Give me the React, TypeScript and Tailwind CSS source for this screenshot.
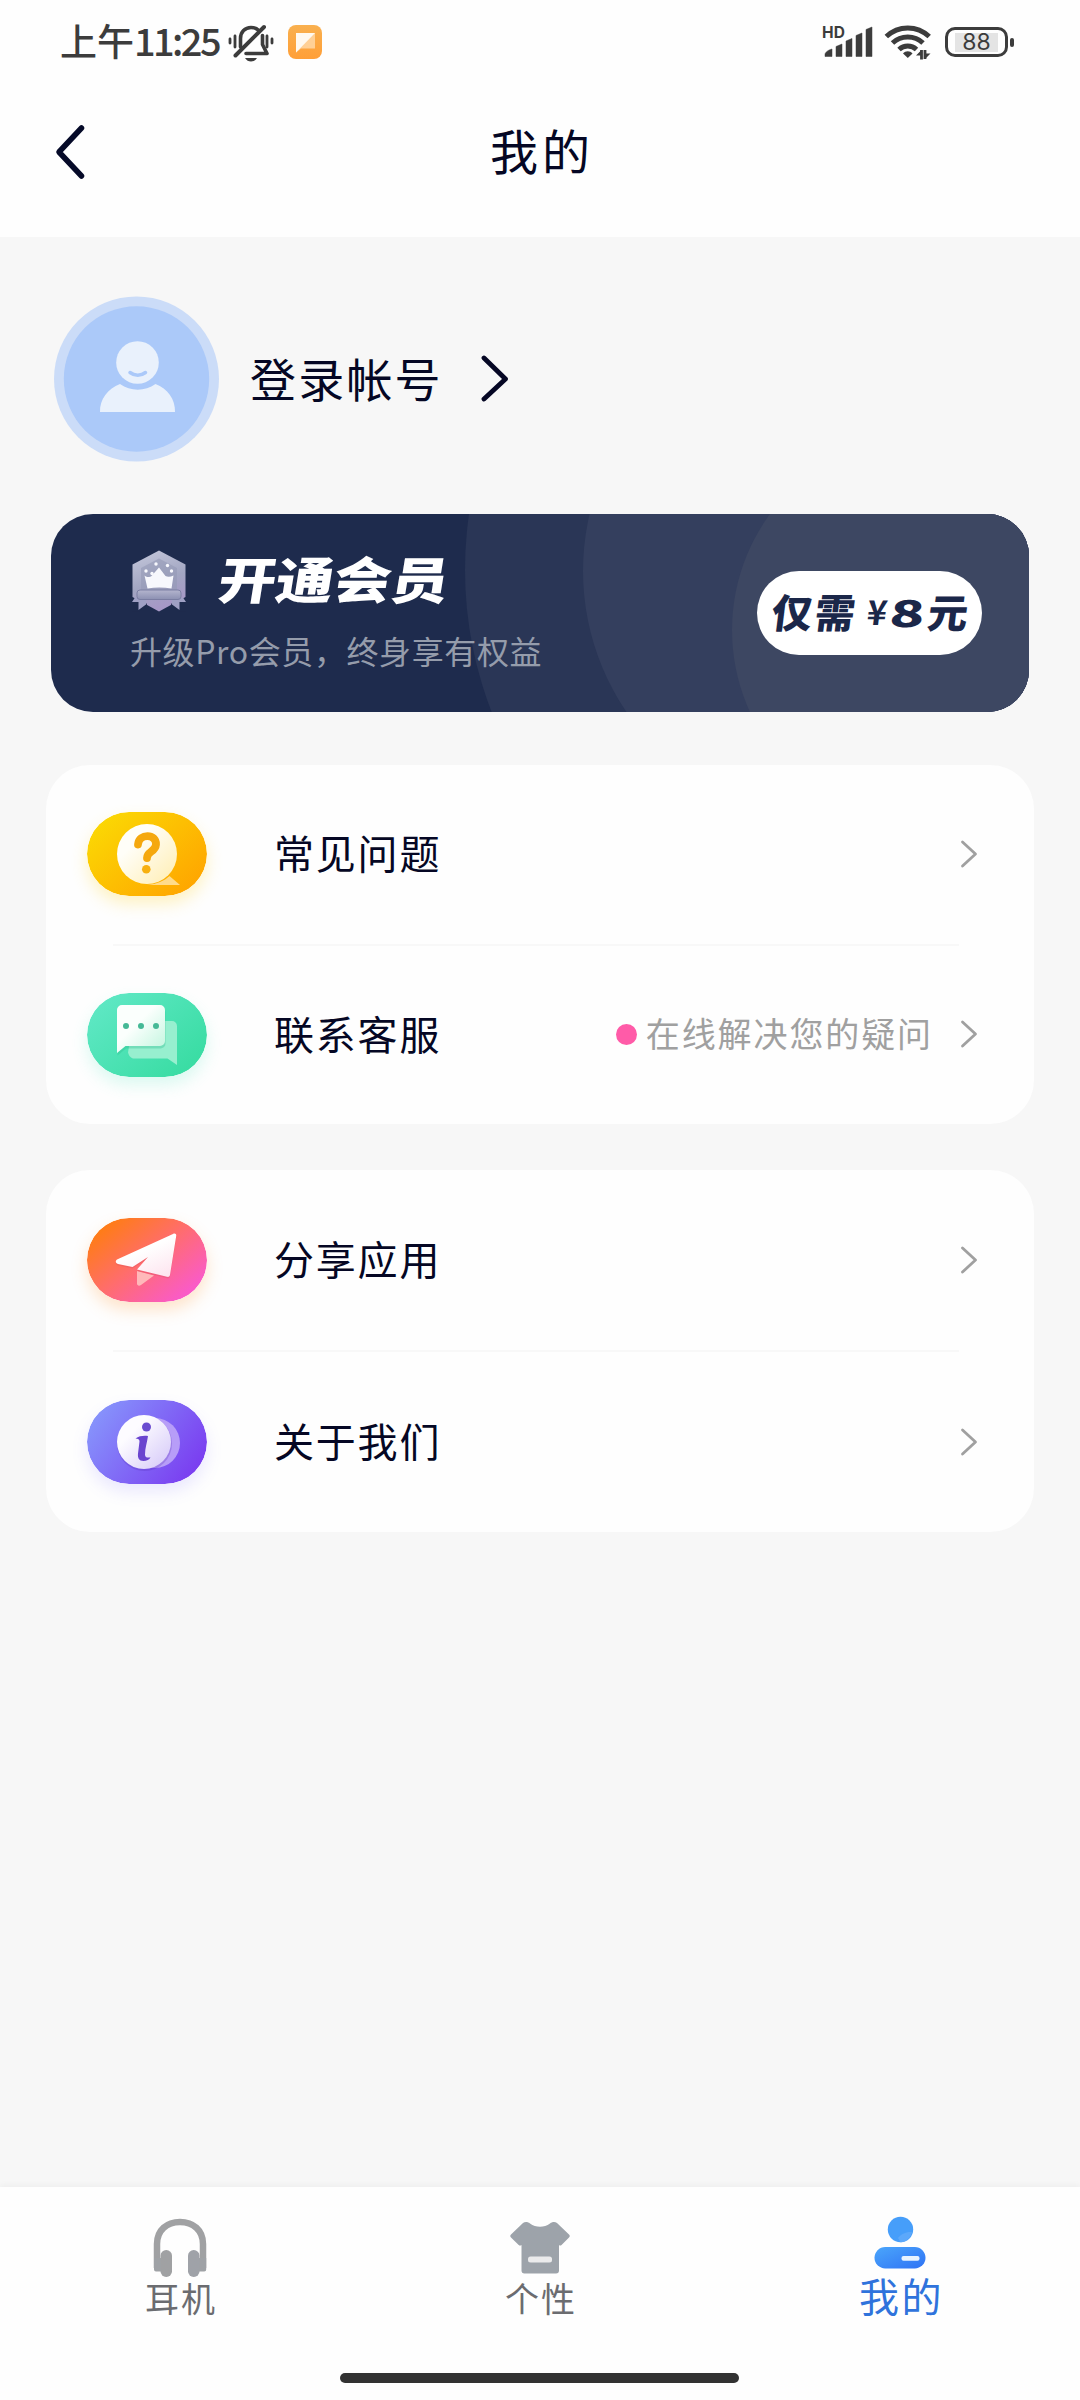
import { ReactNode } from "react";

interface rowProps {
    icon: ReactNode
    label: string
    note?: string
}

function BellOffIcon() {
    return (
        <svg className="ml-[8px] shrink-0" width="46" height="40" viewBox="0 0 46 40" fill="none" stroke="#3c3c3c" strokeLinecap="round">
            <path d="M2 17v4M7 14v11M39 14v11M44 17v4" strokeWidth="2.8" />
            <path d="M12.500 25V16.500C12.500 10 17 5.500 23 5.500c3 0 5.500.8 7.500 2.700M34.500 13.500v9l4.500 9H18" strokeWidth="3.600" strokeLinejoin="round" />
            <path d="M7.500 33.500 36 5" strokeWidth="4" />
            <path d="M17 36h12c-1.500 2.500-3.500 3.500-6 3.500s-4.500-1-6-3.500z" fill="#3c3c3c" stroke="none" />
        </svg>
    )
}

function NoteAppIcon() {
    return (
        <svg className="ml-[14px] shrink-0" width="34" height="34" viewBox="0 0 34 34">
            <defs>
                <linearGradient id="noteBg" x1="0" y1="0" x2="0" y2="1">
                    <stop offset="0" stopColor="#f9b04f" />
                    <stop offset="1" stopColor="#ff9f38" />
                </linearGradient>
            </defs>
            <rect width="34" height="34" rx="8" fill="url(#noteBg)" />
            <path d="M8 8h19v15.500H13L8 27.500z" fill="#ffd096" />
            <path d="M8 8h19L8 27.500z" fill="#fff9f0" />
        </svg>
    )
}

function SignalIcon() {
    return (
        <svg className="shrink-0" width="52" height="48" viewBox="0 -6 52 48">
            <text x="0" y="13.500" fontSize="15.500" fontWeight="700" fill="#3c3c3c" textLength="23" fontFamily="Inter, sans-serif">HD</text>
            <path d="M3 32.500v-2c0-2 3-4.500 7-5.500v7.500zM14 22.500l6-2.500v12.500h-6zM24 17l6-2.500v18h-6zM34 11.500l6-2.500v23.500h-6zM44 5.500l6-2.500v29.500h-6z" fill="#3c3c3c" stroke="#3c3c3c" strokeWidth="0.500" strokeLinejoin="round" />
        </svg>
    )
}

function WifiIcon() {
    return (
        <svg className="ml-[10px] shrink-0" width="48" height="36" viewBox="0 0 48 36" fill="none" stroke="#3c3c3c">
            <path d="M2.300 12.500C14.500 1 33 1 45.200 12.500" strokeWidth="5" />
            <path d="M8.500 19c8.500-8 22-8 30.500 0" strokeWidth="5" />
            <path d="M15 25.500c5-4.600 12.500-4.600 17.500 0" strokeWidth="5" />
            <path d="M19 29.500c2.500-3 7-3 9.500 0l-4.700 4.500z" fill="#3c3c3c" stroke="none" />
            <path d="M37.500 26v9.500M41 35v-9" strokeWidth="2.800" />
            <path d="M32 31.500l5-5v5zM46.500 29.500l-5 5v-5z" fill="#3c3c3c" stroke="none" />
        </svg>
    )
}

function StatusBar() {
    return (
        <div className="flex h-[84px] items-center pl-[60px] pr-[66px] text-[#3c3c3c]">
            <div className="flex h-10 w-[160px] items-center whitespace-nowrap pb-1 font-medium leading-none">
                <span className="text-[37px]">上午</span>
                <span className="text-[38px] tracking-[-2.6px]">11:25</span>
            </div>
            <BellOffIcon />
            <NoteAppIcon />
            <div className="ml-auto flex items-center">
                <SignalIcon />
                <WifiIcon />
                <div className="ml-[13px] flex h-[30px] w-[63px] items-center justify-center rounded-[10px] border-[3px] border-[#3c3c3c]">
                    <div className="flex h-[19px] w-[43px] items-center justify-center bg-[#e4e4e4] font-[Inter] text-[23px] leading-none">88</div>
                </div>
                <div className="ml-0.5 h-[9px] w-1 rounded-sm bg-[#3c3c3c]"></div>
            </div>
        </div>
    )
}

function Avatar() {
    return (
        <svg className="shrink-0" width="166" height="166" viewBox="0 0 166 166">
            <circle cx="82.500" cy="83" r="82.500" fill="#cbdcf8" />
            <circle cx="82.500" cy="83" r="72.700" fill="#abc9f9" />
            <circle cx="83.500" cy="66.500" r="21.300" fill="#e9f1fc" />
            <path d="M76 76.500c4.500 3.500 11 3.500 15.500 0" fill="none" stroke="#abc9f9" strokeWidth="3.500" strokeLinecap="round" />
            <path d="M46 116c-.5-12.500 8-23.500 20-28 10.500 7.500 25 7.500 35.500 0 12 4.500 20 15.500 19.500 28z" fill="#e9f1fc" />
        </svg>
    )
}

function MedalIcon() {
    return (
        <svg className="shrink-0" width="54" height="62" viewBox="0 0 54 62">
            <defs>
                <linearGradient id="medal" x1="0" y1="0" x2="0.300" y2="1">
                    <stop offset="0" stopColor="#c6c9dc" />
                    <stop offset="0.600" stopColor="#a2a6c2" />
                    <stop offset="1" stopColor="#a698c6" />
                </linearGradient>
                <linearGradient id="ribbon" x1="0" y1="0" x2="0" y2="1">
                    <stop offset="0" stopColor="#b4b5ce" />
                    <stop offset="1" stopColor="#8c90b2" />
                </linearGradient>
            </defs>
            <path d="M27 0.500 53.500 14.500V47L27 61.500 0.500 47V14.500z" fill="url(#medal)" />
            <path d="M0 49.500h12l3 5-7.500 7H0zM54 49.500H42l-3 5 7.500 7H54z" fill="#1e2b4d" />
            <path d="M0 52 3 47.500h11v7L6.500 60v-8zM54 52l-3-4.500H40v7l7.500 5.500v-8z" fill="#9fa0c4" />
            <path d="M27 8.500 45 18v22H9V18z" fill="#9599b6" opacity="0.600" />
            <path d="M12.500 25.500c3 2.500 5.500 1.500 7 .500L27 17.500l6.500 8.500c2 1 5 1 8-.500L39.500 38.500c-8-1.500-16.500-1.500-24 0z" fill="#f7f8fd" />
            <circle cx="24" cy="14" r="1.700" fill="#f7f8fd" />
            <circle cx="35.500" cy="15.500" r="1.700" fill="#f7f8fd" />
            <circle cx="14" cy="21" r="1.700" fill="#f7f8fd" />
            <circle cx="39.500" cy="21" r="1.700" fill="#f7f8fd" />
            <circle cx="20" cy="23.500" r="1.700" fill="#f7f8fd" />
            <rect x="5" y="40" width="44" height="9.500" rx="3" fill="url(#ribbon)" stroke="#777b9f" strokeWidth="0.900" />
        </svg>
    )
}

function MemberBanner() {
    return (
        <div className="relative mx-[51px] flex h-[198px] items-center overflow-hidden rounded-[42px] bg-[#1e2b4d] pl-[81px] pr-[47px]">
            <svg className="absolute inset-0" width="978" height="198" viewBox="0 0 978 198">
                <circle cx="806" cy="56" r="392" fill="#2a3656" />
                <circle cx="782" cy="57" r="250" fill="#343f5e" />
                <rect x="782" width="200" height="198" fill="#3d4762" />
                <circle cx="877" cy="116" r="196" fill="#3d4762" />
            </svg>
            <div className="relative pb-[11px]">
                <div className="flex h-[62px] items-center">
                    <MedalIcon />
                    <span className="ml-[33px] inline-block origin-left -skew-x-[8deg] scale-x-[1.150] whitespace-nowrap pb-[7px] text-[50px] font-black leading-none text-white">开通会员</span>
                </div>
                <p className="-ml-0.5 mt-[22px] whitespace-nowrap text-[32px] leading-none tracking-[0.6px] text-[#959cab]">升级Pro会员，终身享有权益</p>
            </div>
            <div className="relative ml-auto flex h-[84px] w-[225px] shrink-0 items-center justify-center rounded-full bg-white text-[#1b2749]">
                <div className="flex -skew-x-[7deg] items-center whitespace-nowrap pb-1 font-black leading-none">
                    <span className="inline-block w-[88px] text-[40px] tracking-[3px]">仅需</span>
                    <span className="ml-1.5 inline-block w-[22px] text-center text-[34px] font-bold">¥</span>
                    <span className="ml-0.5 inline-block w-[36px] origin-left scale-x-[1.550] text-[37px]">8</span>
                    <span className="ml-0.5 inline-block text-[40px]">元</span>
                </div>
            </div>
        </div>
    )
}

function QuestionIcon() {
    return (
        <svg className="shrink-0 rounded-full shadow-[0_8px_16px_rgba(255,215,60,0.3)]" width="120" height="84" viewBox="0 0 120 84">
            <defs>
                <linearGradient id="yellow" x1="0" y1="0.100" x2="1" y2="0.900">
                    <stop offset="0" stopColor="#fbdb04" />
                    <stop offset="1" stopColor="#ffa200" />
                </linearGradient>
                <linearGradient id="cream" x1="0" y1="0" x2="1" y2="1">
                    <stop offset="0.300" stopColor="#fffef8" />
                    <stop offset="1" stopColor="#ffedb0" />
                </linearGradient>
            </defs>
            <rect width="120" height="84" rx="42" fill="url(#yellow)" />
            <path d="M60 73c10-1 17-4 22.500-9L93 73z" fill="#ffdb8a" />
            <circle cx="60" cy="42" r="30" fill="url(#cream)" />
            <path d="M51 32.500C52 21 69.500 21.500 69 32.500c-.5 7.500-9 7-9 13.500" fill="none" stroke="#f5a80e" strokeWidth="7.800" strokeLinecap="round" />
            <circle cx="59.300" cy="57.300" r="4.300" fill="#f7b010" />
        </svg>
    )
}

function ChatIcon() {
    return (
        <svg className="shrink-0 rounded-full shadow-[0_8px_16px_rgba(80,230,190,0.2)]" width="120" height="84" viewBox="0 0 120 84">
            <defs>
                <linearGradient id="green" x1="0" y1="0" x2="1" y2="0.800">
                    <stop offset="0" stopColor="#63e9c8" />
                    <stop offset="1" stopColor="#38dca2" />
                </linearGradient>
                <linearGradient id="mint" x1="0" y1="0" x2="1" y2="1">
                    <stop offset="0.400" stopColor="#fbfffd" />
                    <stop offset="1" stopColor="#bff5dd" />
                </linearGradient>
            </defs>
            <rect width="120" height="84" rx="42" fill="url(#green)" />
            <path d="M46 28h39a5 5 0 0 1 5 5v39l-9.500-6.500H47c-3 0-5-2.500-6-6z" fill="#97efcf" />
            <path d="M30 18a5 5 0 0 1 5-5h38a5 5 0 0 1 5 5v31a5 5 0 0 1-5 5H38.500L30 61z" fill="#2fbd90" opacity="0.350" transform="translate(0.500 1.500)" />
            <path d="M30 17a5 5 0 0 1 5-5h38a5 5 0 0 1 5 5v31a5 5 0 0 1-5 5H38.500L30 60z" fill="url(#mint)" />
            <circle cx="39" cy="33" r="3" fill="#45b996" />
            <circle cx="54" cy="33" r="3" fill="#45b996" />
            <circle cx="69" cy="33" r="3" fill="#45b996" />
        </svg>
    )
}

function PlaneIcon() {
    return (
        <svg className="shrink-0 rounded-full shadow-[0_8px_16px_rgba(255,150,50,0.25)]" width="120" height="84" viewBox="0 0 120 84">
            <defs>
                <linearGradient id="sunset" x1="0.100" y1="0.100" x2="0.900" y2="0.800">
                    <stop offset="0" stopColor="#ff7d10" />
                    <stop offset="0.500" stopColor="#ff6d6b" />
                    <stop offset="1" stopColor="#fa5bc6" />
                </linearGradient>
                <linearGradient id="paper" x1="0.400" y1="0.200" x2="0.900" y2="1">
                    <stop offset="0.200" stopColor="#ffffff" />
                    <stop offset="1" stopColor="#fde3ee" />
                </linearGradient>
            </defs>
            <rect width="120" height="84" rx="42" fill="url(#sunset)" />
            <path d="M50 53l17 4.500L54 67c-2 1.500-4 .500-4-1.500z" fill="#ffb9ba" />
            <path d="M30 41.500 86 16c2-1 3.500 0 3.200 2L83 57c-.4 1.600-1.500 2.200-3 1.800L50 51.500 61 39 45.500 49 31 46c-2.500-.7-3-3.300-1-4.500z" fill="#d94d5c" opacity="0.300" transform="translate(0 1.500)" />
            <path d="M30 41.500 86 16c2-1 3.500 0 3.200 2L83 57c-.4 1.600-1.500 2.200-3 1.800L50 51.500 61 39 45.500 49 31 46c-2.500-.7-3-3.300-1-4.500z" fill="url(#paper)" />
        </svg>
    )
}

function InfoIcon() {
    return (
        <svg className="shrink-0 rounded-full shadow-[0_8px_16px_rgba(120,110,255,0.15)]" width="120" height="84" viewBox="0 0 120 84">
            <defs>
                <linearGradient id="violet" x1="0" y1="0.200" x2="1" y2="0.700">
                    <stop offset="0" stopColor="#8797fc" />
                    <stop offset="1" stopColor="#7a3cf0" />
                </linearGradient>
                <linearGradient id="pearl" x1="0" y1="0" x2="1" y2="1">
                    <stop offset="0.300" stopColor="#fdfcff" />
                    <stop offset="1" stopColor="#d3c6f8" />
                </linearGradient>
            </defs>
            <rect width="120" height="84" rx="42" fill="url(#violet)" />
            <circle cx="68" cy="43" r="25" fill="#b79df8" />
            <circle cx="57.500" cy="43.500" r="27.500" fill="#5127b5" opacity="0.250" />
            <circle cx="57" cy="42" r="27" fill="url(#pearl)" />
            <circle cx="59.500" cy="27" r="4.500" fill="#6a4cd0" />
            <path d="M48.500 38.500c3.500-2.500 8-3 12.500-2.500-1 7-3 12-3 18.500 0 3 2.500 3.500 5.500 2.800-1 2.500-4 3.700-7 3.700-4.500 0-6-3-5.500-7.500l1.500-12c.2-2-1.500-2.700-4-3z" fill="#6a45cf" />
        </svg>
    )
}

function Row({ icon, label, note }: rowProps) {
    return (
        <div className="flex flex-1 items-center pl-[41px] pr-[56px]">
            {icon}
            <span className="ml-[67px] whitespace-nowrap pb-1 text-[40px] leading-none tracking-[1.8px] text-[#050724]">{label}</span>
            <div className="ml-auto flex items-center">
                {note && <span className="mr-[9px] h-[21px] w-[21px] rounded-full bg-[#ff5ba8]"></span>}
                {note && <span className="mr-[27px] whitespace-nowrap pb-1 text-[34px] leading-none tracking-[1.9px] text-[#a0a0a0]">{note}</span>}
                <svg className="mb-px" width="18" height="28" viewBox="0 0 18 28" fill="none" stroke="#a0a0a0" strokeWidth="2.800" strokeLinecap="round" strokeLinejoin="round">
                    <path d="M2.500 2 15.500 14 2.500 26" />
                </svg>
            </div>
        </div>
    )
}

function Divider() {
    return <div className="ml-[67px] mr-[75px] h-0.5 bg-[#f8f8f8]"></div>
}

function HeadphoneIcon() {
    return (
        <svg width="54" height="60" viewBox="0 0 54 60">
            <path d="M4 50V26C4 12 14 4 27 4s23 8 23 22v24" fill="none" stroke="#a0a1a3" strokeWidth="6.500" />
            <path d="M1 40h10v13.500H3a2 2 0 0 1-2-2zM53.200 40H43v13.500h8.200a2 2 0 0 0 2-2z" fill="#9fa2a6" />
            <rect x="7.500" y="32" width="11.500" height="27" rx="5.700" fill="#a0a1a3" />
            <rect x="35" y="32" width="11.500" height="27" rx="5.700" fill="#9fa2a8" />
        </svg>
    )
}

function ShirtIcon() {
    return (
        <svg width="60" height="54" viewBox="0 0 60 54">
            <path d="M13 2c2-1.500 5-1.200 7 .500 6 4.300 14 4.300 20 0 2-1.700 5-2 7-.500L59 13.500c1 1 1 2 0 3l-7.500 7.500c-.8.800-1.800.700-2.500 0V49.500a3 3 0 0 1-3 3H14.500a3 3 0 0 1-3-3V24c-1 .700-2 .700-2.800 0L1 16.500c-1-1-1-2 0-3z" fill="#9da3aa" />
            <rect x="18" y="35.500" width="24" height="6" rx="2.500" fill="#ebebec" />
        </svg>
    )
}

function MineIcon() {
    return (
        <svg width="52" height="54" viewBox="0 0 52 54">
            <defs>
                <linearGradient id="mine" x1="0" y1="0" x2="1" y2="1">
                    <stop offset="0" stopColor="#4ba6fb" />
                    <stop offset="1" stopColor="#2f73f5" />
                </linearGradient>
            </defs>
            <circle cx="26.500" cy="13.500" r="12.700" fill="#469efa" />
            <path d="M24 22c3-4 8-6.500 14-6-1 6-6.500 10.500-11.500 10.200z" fill="#5ca8fa" />
            <rect x="0.500" y="31" width="51" height="21.500" rx="10.700" fill="url(#mine)" />
            <rect x="27.500" y="40" width="18" height="4.800" rx="2" fill="#e9f4ff" />
        </svg>
    )
}

export default function App() {
    return (
        <div className="flex h-[2400px] w-[1080px] flex-col overflow-hidden bg-[#f7f7f7] font-['Noto_Sans_CJK_SC',sans-serif]">
            <header className="h-[237px] bg-[#fefefe]">
                <StatusBar />
                <div className="flex h-[136px] items-center px-[55px]">
                    <svg width="32" height="56" viewBox="0 0 32 56" fill="none" stroke="#050a28" strokeWidth="5.500" strokeLinecap="round" strokeLinejoin="round">
                        <path d="M26.500 4 4 28l22.500 24" />
                    </svg>
                    <h1 className="flex-1 pb-1.5 pr-[28px] text-center text-[48px] leading-none tracking-[4px] text-[#050724]">我的</h1>
                </div>
            </header>

            <main className="flex flex-1 flex-col">
                <div className="mt-[59px] flex h-[166px] items-center pl-[54px]">
                    <Avatar />
                    <span className="ml-[30px] whitespace-nowrap pb-1 text-[46px] leading-none tracking-[2.2px] text-[#050724]">登录帐号</span>
                    <svg className="mb-px ml-[35px]" width="32" height="48" viewBox="0 0 32 48" fill="none" stroke="#050724" strokeWidth="4.800" strokeLinecap="round" strokeLinejoin="round">
                        <path d="M6 3l21.500 21L6 44" />
                    </svg>
                </div>

                <div className="mt-[52px]">
                    <MemberBanner />
                </div>

                <div className="mx-[46px] mt-[53px] flex h-[359px] flex-col rounded-[44px] bg-[#fefefe]">
                    <Row icon={<QuestionIcon />} label="常见问题" />
                    <Divider />
                    <Row icon={<ChatIcon />} label="联系客服" note="在线解决您的疑问" />
                </div>

                <div className="mx-[46px] mt-[46px] flex h-[362px] flex-col rounded-[44px] bg-[#fefefe]">
                    <Row icon={<PlaneIcon />} label="分享应用" />
                    <Divider />
                    <Row icon={<InfoIcon />} label="关于我们" />
                </div>
            </main>

            <nav className="h-[213px] bg-[#fefefe] shadow-[0_-2px_6px_rgba(0,0,0,0.04)]">
                <div className="grid h-[186px] grid-cols-3 pt-[27px]">
                    <div className="flex flex-col items-center">
                        <div className="flex h-[64px] items-end"><HeadphoneIcon /></div>
                        <span className="mt-[3px] pl-0.5 text-[34px] leading-none tracking-[2px] text-[#6b6c70]">耳机</span>
                    </div>
                    <div className="flex flex-col items-center">
                        <div className="flex h-[64px] items-end pb-[3px]"><ShirtIcon /></div>
                        <span className="mt-[3px] pl-0.5 text-[34px] leading-none tracking-[2px] text-[#6b6c70]">个性</span>
                    </div>
                    <div className="flex flex-col items-center">
                        <div className="flex h-[64px] items-end pb-2"><MineIcon /></div>
                        <span className="-mt-[3px] pl-[3px] text-[40px] leading-none tracking-[2.500px] text-[#2f73dc]">我的</span>
                    </div>
                </div>
                <div className="ml-[340px] h-2.5 w-[399px] rounded-full bg-[#323232]"></div>
            </nav>
        </div>
    )
}
